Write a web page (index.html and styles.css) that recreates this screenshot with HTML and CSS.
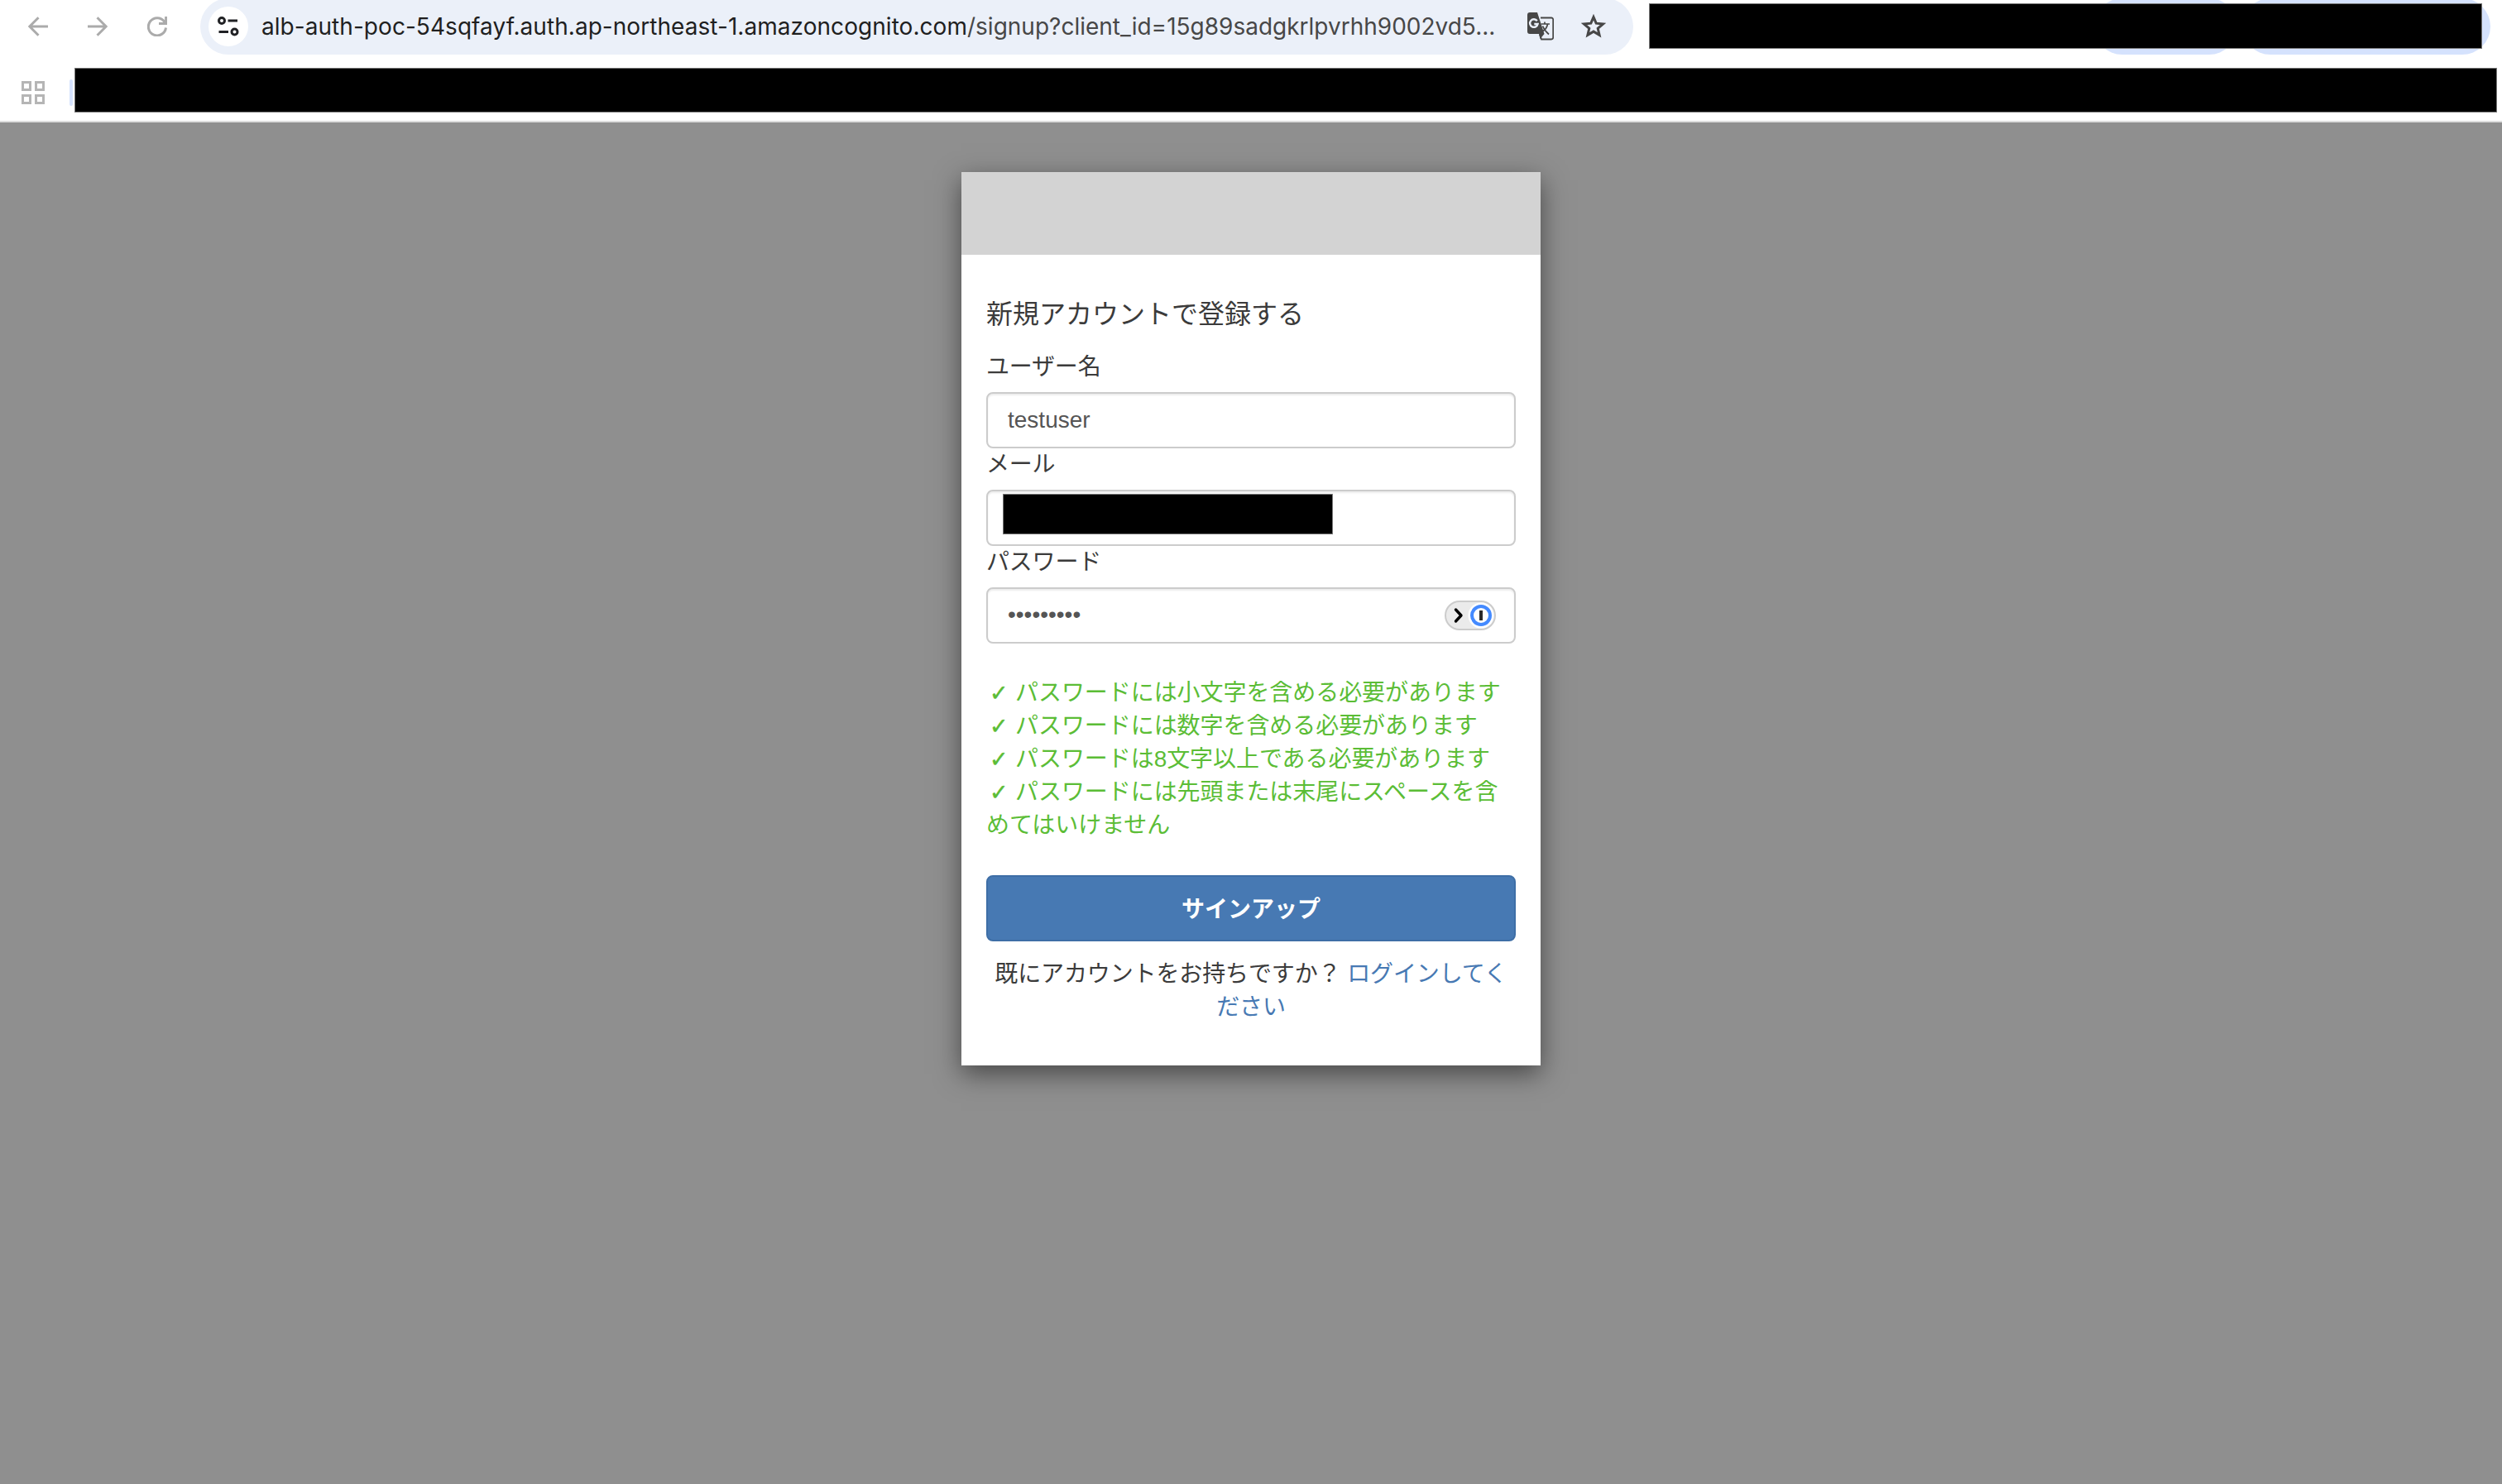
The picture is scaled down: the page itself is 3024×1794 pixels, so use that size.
FILE: index.html
```html
<!DOCTYPE html>
<html lang="ja">
<head>
<meta charset="utf-8">
<title>Signup</title>
<link rel="stylesheet" href="styles.css">
</head>
<body>
<header class="browser">
  <div class="toolbar">
    <div class="nav">
      <svg class="nav-icon" viewBox="0 0 24 24"><path d="M24 12H2M12.500 1.200 1.800 12l10.700 10.800"/></svg>
      <svg class="nav-icon" viewBox="0 0 24 24"><path d="M0 12h22M11.500 1.200 22.200 12l-10.700 10.800"/></svg>
      <svg class="nav-icon" viewBox="0 0 24 24"><path d="M22.500 13.500A10.600 10.600 0 1 1 20.500 6L22 8.500M22.600 0v8.600h-8.600"/></svg>
    </div>
    <div class="omnibox">
      <div class="site-info">
        <svg class="tune" viewBox="0 0 26 24"><circle cx="5" cy="5" r="3.500"/><path d="M12.500 5H24M1.500 18.500H13"/><circle cx="20.500" cy="18.500" r="3.500"/></svg>
      </div>
      <div class="url"><span class="host">alb-auth-poc-54sqfayf.auth.ap-northeast-1.amazoncognito.com</span><span class="path">/signup?client_id=15g89sadgkrlpvrhh9002vd5...</span></div>
      <svg class="translate" viewBox="0 0 32 34"><path class="back" d="M16 6.500h13a2.200 2.200 0 0 1 2.200 2.200v21.600a2.200 2.200 0 0 1-2.200 2.200H17l-2-6"/><path class="solid" d="M3 0h9l8.500 26H3a3 3 0 0 1-3-3V3a3 3 0 0 1 3-3zM14 26h6.500L15.500 32z"/><path class="g" d="M11.800 10.200A4.800 4.800 0 1 0 12.600 14H8.300"/><path class="char" d="M16.500 14H27M21 11.500V14M24.500 14c-.6 4-3.500 7.500-6.500 9M18.500 16.500c1.500 4 4 7 7.500 10"/></svg>
      <svg class="star" viewBox="0 0 30 30"><path d="M15 3.600l3.200 7.600 8.300.7-6.300 5.400 1.900 8.100-7.100-4.300-7.100 4.300 1.900-8.100-6.300-5.400 8.300-.7z"/></svg>
    </div>
    <div class="extensions">
      <div class="chip chip-small"></div>
      <div class="chip chip-wide"></div>
      <div class="mask mask-extensions"></div>
    </div>
  </div>
  <div class="bookmarks">
    <svg class="apps" viewBox="0 0 28 28"><path d="M1.500 1.500h9v9h-9zM17.500 1.500h9v9h-9zM1.500 17.500h9v9h-9zM17.500 17.500h9v9h-9z"/></svg>
    <div class="group"></div>
    <div class="mask mask-bookmarks"></div>
  </div>
</header>
<main class="page">
  <section class="card">
    <div class="banner"></div>
    <form class="form">
      <h1 class="title">新規アカウントで登録する</h1>
      <div class="label">ユーザー名</div>
      <div class="field"><span class="value">testuser</span></div>
      <div class="label">メール</div>
      <div class="field"><div class="mask mask-mail"></div></div>
      <div class="label">パスワード</div>
      <div class="field">
        <span class="value dots">•••••••••</span>
        <svg class="password-manager" viewBox="0 0 62 36"><rect class="pill" x="1" y="1" width="60" height="34" rx="17"/><circle class="knob" cx="44" cy="18" r="15.500"/><circle class="ring" cx="44" cy="18" r="11"/><path class="bar" d="M44 12v12"/><path class="chevron" d="M13.500 11 20 18l-6.500 7"/></svg>
      </div>
      <div class="rules">
        <div><span class="check">✓</span>パスワードには小文字を含める必要があります</div>
        <div><span class="check">✓</span>パスワードには数字を含める必要があります</div>
        <div><span class="check">✓</span>パスワードは8文字以上である必要があります</div>
        <div><span class="check">✓</span>パスワードには先頭または末尾にスペースを含<br>めてはいけません</div>
      </div>
      <button class="submit" type="button">サインアップ</button>
      <p class="login">既にアカウントをお持ちですか？ <a class="link">ログインしてく<br>ださい</a></p>
    </form>
  </section>
</main>
</body>
</html>
```

FILE: styles.css
```css
* { box-sizing: border-box; }
body {
  margin: 0;
  width: 3024px;
  height: 1794px;
  overflow: hidden;
  background: #8f8f8f;
  color: #3b3b3b;
  font: 28px/40px "Liberation Sans", "Noto Sans CJK JP", sans-serif;
}
svg { display: block; flex: none; fill: none; }
.mask { background: #000; border: 1px solid #777; flex: none; }

.browser { height: 148px; background: #fff; border-bottom: 2px solid #dedede; }
.toolbar { height: 66px; display: flex; align-items: flex-start; }
.nav { width: 242px; padding: 20px 0 0 34px; display: flex; gap: 48px; }
.nav-icon { width: 24px; height: 24px; stroke: #ababab; stroke-width: 3; }
.omnibox {
  width: 1732px;
  height: 68px;
  margin-top: -2px;
  padding: 0 33px 0 10px;
  display: flex;
  align-items: center;
  border-radius: 34px;
  background: #ebf0f9;
}
.site-info {
  width: 48px;
  height: 48px;
  border-radius: 50%;
  background: #fff;
  display: grid;
  place-items: center;
}
.tune { width: 26px; height: 24px; stroke: #202124; stroke-width: 3; }
.url {
  flex: 1;
  padding-left: 16px;
  font-family: Inter, sans-serif;
  font-size: 28px;
  white-space: nowrap;
}
.host { color: #1f1f1f; letter-spacing: .05px; }
.path { color: #474747; }
.translate { width: 32px; height: 34px; margin-right: 33px; }
.translate .back { stroke: #474747; stroke-width: 1.8; }
.translate .solid { fill: #474747; }
.translate .g { stroke: #ebf0f9; stroke-width: 2.4; }
.translate .char { stroke: #474747; stroke-width: 1.7; }
.star { width: 30px; height: 30px; stroke: #474747; stroke-width: 3; }
.extensions { position: relative; flex: 1; display: flex; gap: 6px; padding-left: 557px; margin-top: -2px; }
.chip { height: 68px; border-radius: 34px; background: #d5e2fd; }
.chip-small { width: 173px; }
.chip-wide { width: 300px; }
.mask-extensions { position: absolute; left: 19px; top: 6px; width: 1007px; height: 55px; }
.bookmarks { height: 80px; padding: 16px 6px 10px 26px; display: flex; align-items: flex-start; }
.apps { width: 28px; height: 28px; margin-top: 16px; stroke: #b5b5b5; stroke-width: 3; }
.group { width: 4px; height: 32px; margin: 14px 2px 0 30px; border-radius: 2px; background: #d5e2fd; }
.mask-bookmarks { flex: 1; height: 54px; }

.page { padding-top: 60px; }
.card {
  width: 700px;
  height: 1080px;
  margin: 0 auto;
  background: #fff;
  box-shadow: 0 10px 30px rgba(0, 0, 0, .5);
}
.banner { height: 100px; background: #d3d3d3; }
.form { padding: 52px 30px 0; }
.title { margin: 0; height: 60px; font-size: 32px; line-height: 40px; font-weight: 400; }
.label { height: 50px; letter-spacing: -.2px; }
.title + .label { height: 54px; padding-top: 4px; }
.field {
  height: 68px;
  padding: 0 22px 0 24px;
  display: flex;
  align-items: center;
  border: 2px solid #ccc;
  border-radius: 8px;
  box-shadow: inset 0 2px 2px rgba(0, 0, 0, .075);
  color: #555;
}
.value { flex: 1; }
.dots { padding-bottom: 2px; }
.mask-mail { width: 399px; height: 49px; margin: -9px 0 0 -6px; }
.password-manager { width: 62px; height: 36px; }
.pill { fill: #ebebeb; stroke: #ccc; stroke-width: 2; }
.knob { fill: #fff; }
.ring { stroke: #448aff; stroke-width: 4; }
.bar { stroke: #2b2b2b; stroke-width: 4; }
.chevron { stroke: #000; stroke-width: 3.4; stroke-linecap: round; stroke-linejoin: round; }
.rules { margin-top: 40px; color: #5bbd36; white-space: nowrap; letter-spacing: -.06px; }
.check {
  display: inline-block;
  width: 35px;
  padding-left: 4px;
  font: 27px/1 "DejaVu Sans", sans-serif;
  -webkit-text-stroke: .5px #5bbd36;
}
.submit {
  display: block;
  width: 640px;
  height: 80px;
  margin: 40px 0 0;
  padding: 0 0 2px;
  border: 2px solid #3e6ea6;
  border-radius: 8px;
  background: #4779b3;
  color: #fff;
  font: 700 28px/40px "Noto Sans CJK JP", sans-serif;
}
.login { margin: 20px 0 0; text-align: center; white-space: nowrap; letter-spacing: -.12px; }
.link { color: #4779b3; }
```
